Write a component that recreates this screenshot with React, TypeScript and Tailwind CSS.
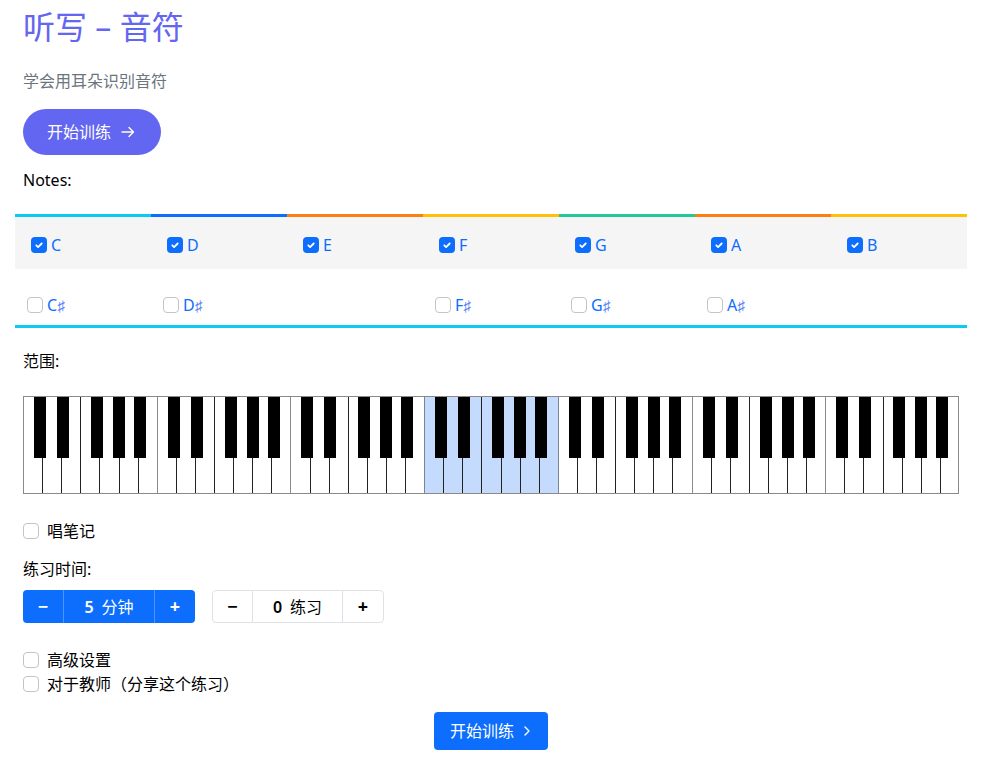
import React from "react";

const FONT = "font-['Noto_Sans','Noto_Sans_CJK_SC',sans-serif]";

function Check({ checked }: { checked: boolean }) {
  if (checked) {
    return (
      <span className="inline-flex h-4 w-4 shrink-0 items-center justify-center rounded-[4px] bg-[#0d6efd]">
        <svg width="12" height="12" viewBox="0 0 20 20">
          <path d="M5.5 10.5l3 3l6-6" fill="none" stroke="#fff" strokeWidth="3" strokeLinecap="round" strokeLinejoin="round" />
        </svg>
      </span>
    );
  }
  return <span className="inline-block h-4 w-4 shrink-0 rounded-[4px] border border-[#c4c4c4] bg-white" />;
}

const naturals = ["C", "D", "E", "F", "G", "A", "B"];
const barColors = ["bg-[#0dcaf0]", "bg-[#0d6efd]", "bg-[#fd7e14]", "bg-[#ffc107]", "bg-[#20c997]", "bg-[#fd7e14]", "bg-[#ffc107]"];
const sharps = ["C", "D", "", "F", "G", "A", ""];

function Piano() {
  const W = 936;
  const H = 98;
  const octW = W / 7;
  const wk = W / 49;
  const blackOffsets = [11, 34, 68, 90, 111];
  const lines: React.ReactNode[] = [];
  for (let i = 1; i < 49; i++) {
    const x = Math.round(i * wk) + 0.5;
    const pos = i % 7;
    const gray = pos === 0;
    lines.push(<line key={"l" + i} x1={x} y1={0} x2={x} y2={H} stroke={gray ? "#8a8a8a" : "#222"} strokeWidth={1} />);
  }
  const blacks: React.ReactNode[] = [];
  for (let o = 0; o < 7; o++) {
    for (let b = 0; b < 5; b++) {
      const x = Math.round(o * octW + blackOffsets[b]);
      blacks.push(<rect key={"b" + o + b} x={x} y={0} width={12} height={62} fill="#000" />);
    }
  }
  const hx = Math.round(3 * octW);
  return (
    <svg width={W} height={H} viewBox={`0 0 ${W} ${H}`} shapeRendering="crispEdges" className="block">
      <rect x={0} y={0} width={W} height={H} fill="#fff" />
      <rect x={hx} y={0} width={Math.round(octW)} height={H} fill="#c4dbfd" />
      {lines}
      {blacks}
      <line x1={hx + 0.5} y1={0} x2={hx + 0.5} y2={H} stroke="#7a8494" />
      <line x1={hx + Math.round(octW) + 0.5} y1={0} x2={hx + Math.round(octW) + 0.5} y2={H} stroke="#7a8494" />
      <rect x={0.5} y={0.5} width={W - 1} height={H - 1} fill="none" stroke="#8a8a8a" />
    </svg>
  );
}

export default function App() {
  return (
    <div className={`${FONT} min-h-[762px] w-[990px] bg-white text-black`}>
      <div className="ml-[15px] w-[952px] pb-4">
        <h1 className="ml-2 mt-[8px] text-[32px] leading-[38px] font-normal text-[#6366f1]">听写 – 音符</h1>
        <p className="ml-2 mt-[23px] text-[16px] leading-[24px] text-[#6c757d]">学会用耳朵识别音符</p>
        <button className="ml-2 mt-[16px] flex h-[46px] w-[138px] items-center rounded-full bg-[#6366f1] pl-[24px] text-[16px] text-white">
          <span>开始训练</span>
          <svg className="ml-[9px]" width="16" height="16" viewBox="0 0 16 16">
            <path d="M2 8h11.5M9 3.5L13.5 8L9 12.5" fill="none" stroke="#fff" strokeWidth="1.4" strokeLinecap="round" strokeLinejoin="round" />
          </svg>
        </button>
        <div className="ml-2 mt-[13px] text-[16px] leading-[24px]">Notes:</div>

        <div className="mt-[22px]">
          <div className="grid grid-cols-7">
            {barColors.map((c, i) => (
              <div key={i} className={`h-[3px] ${c}`} />
            ))}
          </div>
          <div className="grid h-[52px] grid-cols-7 bg-[#f5f5f5]">
            {naturals.map((n) => (
              <div key={n} className="flex items-start pl-[16px] pt-[20px]">
                <Check checked />
                <span className="ml-[4px] -mt-[4px] text-[16px] leading-[24px] text-[#0d6efd]">{n}</span>
              </div>
            ))}
          </div>
          <div className="grid h-[56px] grid-cols-7">
            {sharps.map((n, i) => (
              <div key={i} className="flex items-start pl-[12px] pt-[28px]">
                {n && (
                  <>
                    <Check checked={false} />
                    <span className="ml-[4px] -mt-[4px] text-[16px] leading-[24px] text-[#0d6efd]">
                      {n}
                      <span className="font-['DejaVu_Sans',sans-serif] text-[15px] font-light text-[#4f7cf6]">♯</span>
                    </span>
                  </>
                )}
              </div>
            ))}
          </div>
          <div className="h-[3px] bg-[#0dcaf0]" />
        </div>

        <div className="ml-2 mt-[21px] text-[16px] leading-[24px]">范围:</div>
        <div className="ml-2 mt-[23px]">
          <Piano />
        </div>

        <label className="ml-2 mt-[25px] flex h-[24px] items-center">
          <Check checked={false} />
          <span className="ml-[8px] text-[16px] leading-[24px]">唱笔记</span>
        </label>

        <div className="ml-2 mt-[14px] text-[16px] leading-[24px]">练习时间:</div>

        <div className="ml-2 mt-[9px] flex gap-[17px]">
          <div className="flex h-[33px] w-[172px] overflow-hidden rounded-[4px] bg-[#0d6efd] text-white">
            <div className="flex w-[41px] items-center justify-center border-r border-[#4d94fd] text-[18px] font-bold">−</div>
            <div className="flex flex-1 items-center justify-center border-r border-[#4d94fd] text-[16px]">
              <span className="font-semibold">5</span>
              <span className="ml-[8px]">分钟</span>
            </div>
            <div className="flex w-[40px] items-center justify-center text-[18px] font-bold">+</div>
          </div>
          <div className="flex h-[33px] w-[172px] overflow-hidden rounded-[4px] border border-[#dee2e6] bg-white text-black">
            <div className="flex w-[40px] items-center justify-center border-r border-[#dee2e6] text-[18px] font-bold">−</div>
            <div className="flex flex-1 items-center justify-center border-r border-[#dee2e6] text-[16px]">
              <span className="font-semibold">0</span>
              <span className="ml-[8px]">练习</span>
            </div>
            <div className="flex w-[40px] items-center justify-center text-[18px] font-bold">+</div>
          </div>
        </div>

        <label className="ml-2 mt-[25px] flex h-[24px] items-center">
          <Check checked={false} />
          <span className="ml-[8px] text-[16px] leading-[24px]">高级设置</span>
        </label>
        <label className="ml-2 flex h-[24px] items-center">
          <Check checked={false} />
          <span className="ml-[8px] text-[16px] leading-[24px]">对于教师（分享这个练习）</span>
        </label>

        <div className="mt-[16px] flex justify-center">
          <button className="flex h-[38px] w-[114px] items-center justify-center rounded-[4px] bg-[#0d6efd] text-[16px] text-white">
            <span>开始训练</span>
            <svg className="ml-[8px]" width="10" height="12" viewBox="0 0 10 12">
              <path d="M3 2l4 4l-4 4" fill="none" stroke="#fff" strokeWidth="1.4" strokeLinecap="round" strokeLinejoin="round" />
            </svg>
          </button>
        </div>
      </div>
    </div>
  );
}
